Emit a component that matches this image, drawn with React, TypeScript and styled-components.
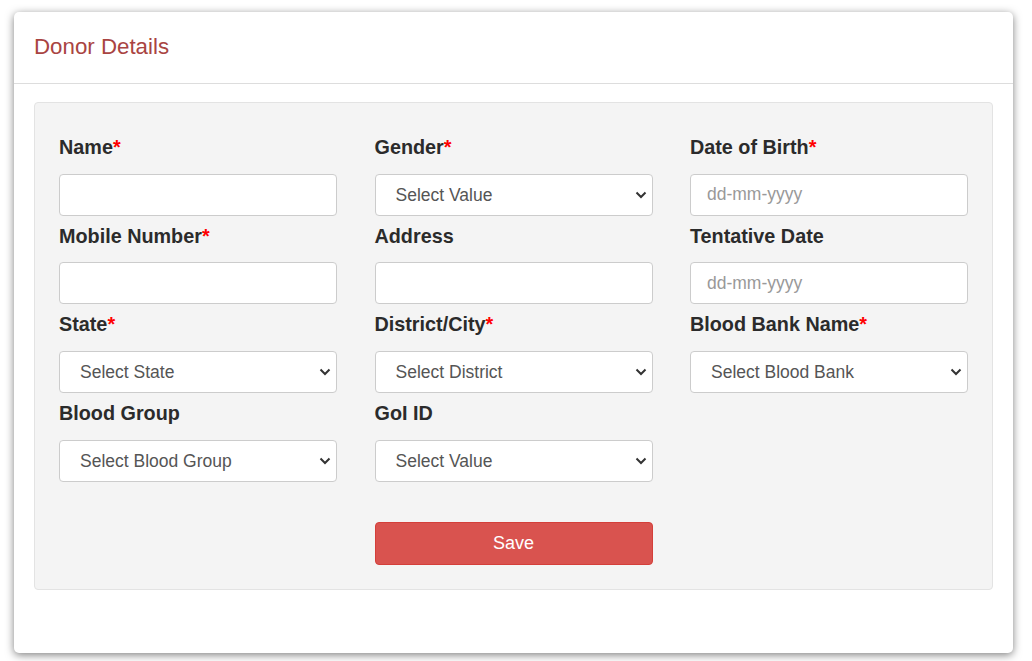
import React from "react";
import styled, { createGlobalStyle } from "styled-components";

const GlobalStyle = createGlobalStyle`
  html, body {
    margin: 0;
    padding: 0;
    background: #ffffff;
    font-family: "Liberation Sans", Arial, sans-serif;
  }
  * { box-sizing: border-box; }
`;

const Page = styled.div`
  padding: 12px 19px 8px 14px;
`;

const Card = styled.section`
  background: #fff;
  border-radius: 5px;
  box-shadow: 0 2px 9px rgba(0, 0, 0, 0.5);
`;

const CardHeader = styled.header`
  padding: 22px 20px 23px;
  border-bottom: 1px solid #dddddd;
`;

const Title = styled.h2`
  margin: 0;
  font-size: 22.3px;
  line-height: 26px;
  font-weight: 400;
  color: #a94442;
`;

const CardBody = styled.div`
  padding: 18px 20px 63px;
`;

const Well = styled.form`
  background: #f4f4f4;
  border: 1px solid #e3e3e3;
  border-radius: 4px;
  padding: 24px 24px 24px;
  display: grid;
  grid-template-columns: 278px 278px 278px;
  justify-content: space-between;
`;

const Field = styled.div`
  display: flex;
  flex-direction: column;
`;

const Label = styled.label`
  margin: 7px 0 13.67px;
  font-size: 19.8px;
  line-height: 26px;
  font-weight: 700;
  color: #2b2b2b;
`;

const Req = styled.span`
  color: #ff0000;
`;

const TextInput = styled.input`
  height: 42px;
  width: 100%;
  padding: 0 16px;
  border: 1px solid #cccccc;
  border-radius: 4px;
  background: #fff;
  font-family: "Liberation Sans", Arial, sans-serif;
  font-size: 17.5px;
  color: #555;
  outline: none;
  &::placeholder {
    color: #999;
  }
`;

const SelectWrap = styled.div`
  position: relative;
`;

const Select = styled.select`
  appearance: none;
  -webkit-appearance: none;
  display: block;
  height: 42px;
  width: 100%;
  padding: 0 30px 0 20px;
  border: 1px solid #cccccc;
  border-radius: 4px;
  background: #fff;
  font-family: "Liberation Sans", Arial, sans-serif;
  font-size: 17.5px;
  color: #555;
  outline: none;
`;

const Chevron = styled.svg`
  position: absolute;
  right: 6px;
  top: 17px;
  width: 12px;
  height: 8px;
  pointer-events: none;
`;

const SaveButton = styled.button`
  grid-column: 2;
  margin-top: 40px;
  height: 43px;
  border: 1px solid #d43f3a;
  border-radius: 4px;
  background: #d9534f;
  color: #fff;
  font-family: "Liberation Sans", Arial, sans-serif;
  font-size: 18px;
  cursor: pointer;
`;

type FieldDef = {
  label: string;
  required?: boolean;
  kind: "text" | "select" | "date";
  placeholder?: string;
};

const fields: FieldDef[] = [
  { label: "Name", required: true, kind: "text" },
  { label: "Gender", required: true, kind: "select", placeholder: "Select Value" },
  { label: "Date of Birth", required: true, kind: "date" },
  { label: "Mobile Number", required: true, kind: "text" },
  { label: "Address", kind: "text" },
  { label: "Tentative Date", kind: "date" },
  { label: "State", required: true, kind: "select", placeholder: "Select State" },
  { label: "District/City", required: true, kind: "select", placeholder: "Select District" },
  { label: "Blood Bank Name", required: true, kind: "select", placeholder: "Select Blood Bank" },
  { label: "Blood Group", kind: "select", placeholder: "Select Blood Group" },
  { label: "GoI ID", kind: "select", placeholder: "Select Value" },
];

export default function App() {
  return (
    <>
      <GlobalStyle />
      <Page>
        <Card>
          <CardHeader>
            <Title>Donor Details</Title>
          </CardHeader>
          <CardBody>
            <Well onSubmit={(e) => e.preventDefault()}>
              {fields.map((f) => (
                <Field key={f.label}>
                  <Label>
                    {f.label}
                    {f.required && <Req>*</Req>}
                  </Label>
                  {f.kind === "text" && <TextInput type="text" />}
                  {f.kind === "date" && <TextInput type="text" placeholder="dd-mm-yyyy" />}
                  {f.kind === "select" && (
                    <SelectWrap>
                      <Select defaultValue="">
                        <option value="">{f.placeholder}</option>
                      </Select>
                      <Chevron viewBox="0 0 12 8" aria-hidden="true">
                        <path d="M1.5 1.5 L6 6 L10.5 1.5" fill="none" stroke="#333" strokeWidth="2" />
                      </Chevron>
                    </SelectWrap>
                  )}
                </Field>
              ))}
              <SaveButton type="submit">Save</SaveButton>
            </Well>
          </CardBody>
        </Card>
      </Page>
    </>
  );
}
